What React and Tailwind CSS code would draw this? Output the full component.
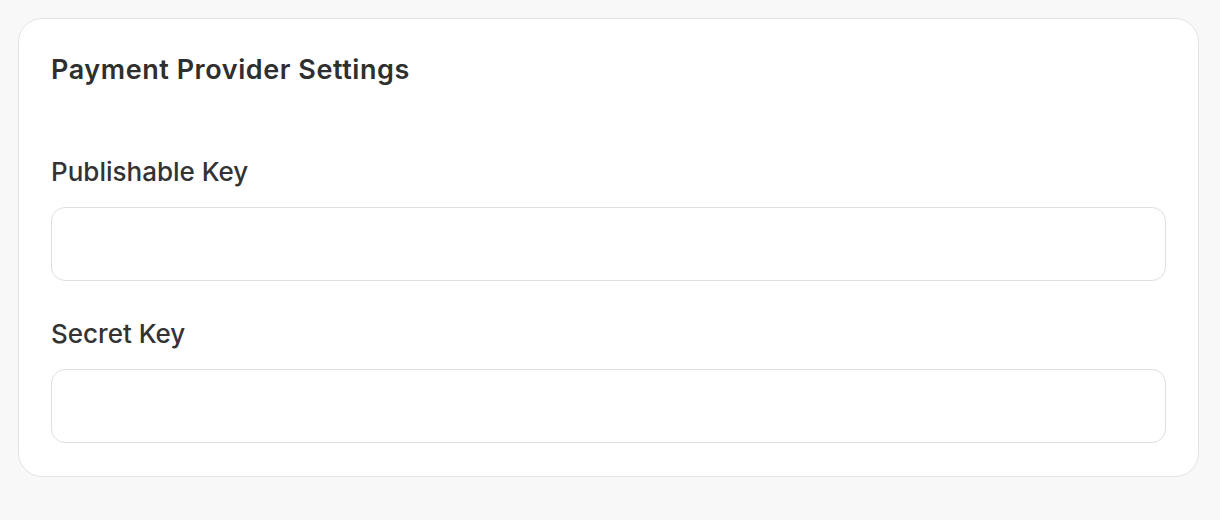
import React from "react";

const Field = ({ label, className = "" }) => (
  <div className={className}>
    <label className="block text-[26px] leading-8 font-medium text-[#333333]">
      {label}
    </label>
    <input
      type="text"
      className="mt-[19px] block w-full h-[74px] rounded-[14px] border-[1.5px] border-[#dfdfdf] bg-white px-4 text-[22px] outline-none"
    />
  </div>
);

const App = () => {
  return (
    <div
      className="min-h-[520px] bg-[#f8f8f8] pt-[18px] pl-[18px] pr-[21px] pb-[18px]"
      style={{ fontFamily: "Inter, 'Noto Sans', sans-serif" }}
    >
      <div className="rounded-[24px] border-[1.5px] border-[#e3e3e3] bg-white px-[32px] pt-[35px] pb-[33px]">
        <h2 className="text-[27px] leading-8 font-semibold tracking-[0.55px] text-[#2f2f2f]">
          Payment Provider Settings
        </h2>
        <Field label="Publishable Key" className="mt-[70px]" />
        <Field label="Secret Key" className="mt-[37px]" />
      </div>
    </div>
  );
};

export default App;
